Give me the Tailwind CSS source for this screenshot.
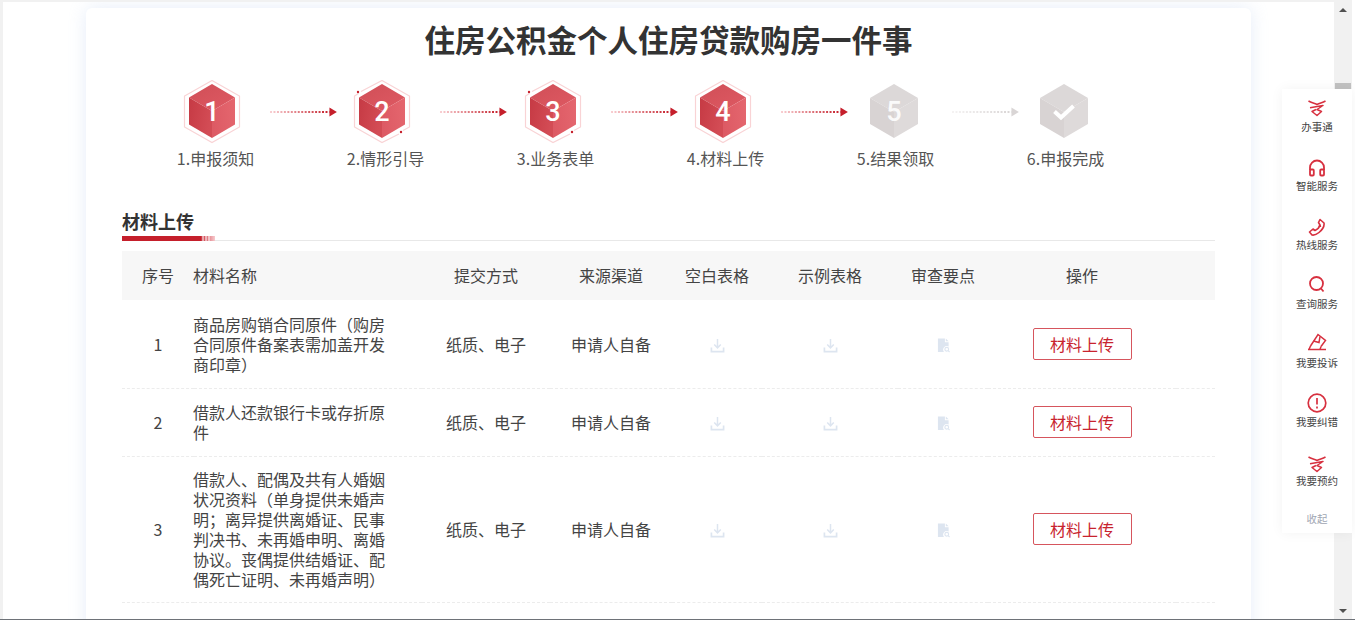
<!DOCTYPE html>
<html lang="zh">
<head>
<meta charset="utf-8">
<script src="https://cdn.jsdelivr.net/npm/@tailwindcss/browser@4"></script>
</head>
<body class="bg-white">
<svg width="0" height="0" class="absolute">
  <defs>
    <linearGradient id="gl" x1="0" y1="0" x2="1" y2="0.3"><stop offset="0" stop-color="#c63a44"/><stop offset="1" stop-color="#d34c55"/></linearGradient>
    <linearGradient id="gr" x1="0" y1="0.5" x2="1" y2="0.3"><stop offset="0" stop-color="#dd5a64"/><stop offset="1" stop-color="#e4666e"/></linearGradient>
    <linearGradient id="gt" x1="0" y1="0" x2="1" y2="1"><stop offset="0" stop-color="#d04e57"/><stop offset="1" stop-color="#df5a63"/></linearGradient>
    <linearGradient id="al" gradientUnits="userSpaceOnUse" x1="0" y1="0" x2="60" y2="0"><stop offset="0" stop-color="#f9d0d3"/><stop offset="1" stop-color="#c51f2b"/></linearGradient>
    <linearGradient id="ag" gradientUnits="userSpaceOnUse" x1="0" y1="0" x2="60" y2="0"><stop offset="0" stop-color="#f5f3f3"/><stop offset="1" stop-color="#d9d5d5"/></linearGradient>
    <linearGradient id="bar" x1="0" y1="0" x2="1" y2="0"><stop offset="0" stop-color="#c51f2b"/><stop offset="1" stop-color="#f7c5c9"/></linearGradient>
    <g id="hexred">
      <polygon points="30,4 53,17.500 30,31 7,17.500" fill="url(#gt)"/>
      <polygon points="7,17.500 30,31 30,58 7,44.500" fill="url(#gl)"/>
      <polygon points="53,17.500 30,31 30,58 53,44.500" fill="url(#gr)"/>
    </g>
    <g id="hexgray">
      <polygon points="30,4 54,18 30,32 6,18" fill="#dcd8d8"/>
      <polygon points="6,18 30,32 30,58 6,44" fill="#d8d3d3"/>
      <polygon points="54,18 30,32 30,58 54,44" fill="#dedada"/>
    </g>
    <g id="flow" fill="none" stroke="#d7303f" stroke-width="1.500" stroke-linejoin="round">
      <path d="M0.500 1c3 1.800 5.500 2 8.500 3.500 3-1.500 5.500-1.700 8.500-3.500"/>
      <path d="M2 7.800L15 5.500 9 9.500l4.500 2L9 15.500l-5-4 4-2"/>
    </g>
    <symbol id="arrow" viewBox="0 0 68 12">
      <line x1="0" y1="6" x2="60" y2="6" stroke="url(#al)" stroke-width="2" stroke-dasharray="2 1.500"/>
      <polygon points="60,1.500 67.500,6 60,10.500" fill="#c51f2b"/>
    </symbol>
    <symbol id="arrowg" viewBox="0 0 68 12">
      <line x1="0" y1="6" x2="60" y2="6" stroke="url(#ag)" stroke-width="2" stroke-dasharray="2 1.500"/>
      <polygon points="60,1.500 67.500,6 60,10.500" fill="#d9d5d5"/>
    </symbol>
    <symbol id="dl" viewBox="0 0 16 16">
      <path d="M8 1v9M4.500 7l3.500 3.500L11.500 7" fill="none" stroke="#dde5f0" stroke-width="1.600"/>
      <path d="M1.500 10v4.500h13V10" fill="none" stroke="#dde5f0" stroke-width="1.800"/>
    </symbol>
    <symbol id="doc" viewBox="0 0 14 16">
      <path d="M1 0.500h7.500v4h4v4.500a4 4 0 0 0-5 6H1z" fill="#dde5f0"/>
      <path d="M9.500 0.500l3 3h-3z" fill="#dde5f0"/>
      <circle cx="10.500" cy="12" r="2" fill="none" stroke="#dde5f0" stroke-width="1.200"/>
      <path d="M12 13.500l1.500 1.500" stroke="#dde5f0" stroke-width="1.200"/>
    </symbol>
  </defs>
</svg>

<div class="relative w-[1355px] h-[622px] overflow-hidden bg-white flex flex-col font-['Noto_Sans_CJK_SC',sans-serif] text-[#3d3d3d]">
  <div class="h-[2px] w-[1352px] bg-[#f1f1f1]"></div>
  <div class="flex-1 min-h-0 flex">
    <div class="w-[3px] bg-[#f1f1f1]"></div>
    <main class="w-[1331px] min-h-0 overflow-hidden pl-[83px] pt-[6px] bg-white">
      <section class="w-[1165px] h-[700px] bg-white rounded-t-md shadow-[0_0_18px_rgba(150,180,230,0.24)]">
        <h1 class="h-[62px] text-center text-[30.5px] leading-[62px] font-bold text-[#333]">住房公积金个人住房贷款购房一件事</h1>

        <div class="flex items-center pl-[96px] h-[65px] mt-[10px]">
          <svg class="w-[60px] h-[65px] shrink-0" viewBox="0 0 60 65">
            <polygon points="30,0.500 57.500,16 57.500,47 30,62.500 2.500,47 2.500,16" fill="none" stroke="#f9d3d5" stroke-width="1.200"/>
            <use href="#hexred"/>
            <text x="30" y="41" text-anchor="middle" font-family="Roboto" font-weight="500" font-size="27" fill="#fff">1</text>
          </svg>
          <svg class="w-[67.4px] h-[12px] ml-[28px] mr-[15px] shrink-0 -mt-px"><use href="#arrow"/></svg>
          <svg class="w-[60px] h-[65px] shrink-0" viewBox="0 0 60 65">
            <path d="M9 11.500L30 0.500l27.500 15.500v31L51 50.500M47 54L30 62.500 2.500 47V16l4-2.500" fill="none" stroke="#f9d3d5" stroke-width="1.200"/>
            <use href="#hexred"/>
            <circle cx="6" cy="12" r="1.200" fill="#c51f2b"/><circle cx="49" cy="52" r="1.200" fill="#c51f2b"/>
            <text x="30" y="41" text-anchor="middle" font-family="Roboto" font-weight="500" font-size="27" fill="#fff">2</text>
          </svg>
          <svg class="w-[67.4px] h-[12px] ml-[28px] mr-[15px] shrink-0 -mt-px"><use href="#arrow"/></svg>
          <svg class="w-[60px] h-[65px] shrink-0" viewBox="0 0 60 65">
            <path d="M9 11.500L30 0.500l27.500 15.500v31L51 50.500M47 54L30 62.500 2.500 47V16l4-2.500" fill="none" stroke="#f9d3d5" stroke-width="1.200"/>
            <use href="#hexred"/>
            <circle cx="6" cy="12" r="1.200" fill="#c51f2b"/><circle cx="49" cy="52" r="1.200" fill="#c51f2b"/>
            <text x="30" y="41" text-anchor="middle" font-family="Roboto" font-weight="500" font-size="27" fill="#fff">3</text>
          </svg>
          <svg class="w-[67.4px] h-[12px] ml-[28px] mr-[15px] shrink-0 -mt-px"><use href="#arrow"/></svg>
          <svg class="w-[60px] h-[65px] shrink-0" viewBox="0 0 60 65">
            <polygon points="30,0.500 57.500,16 57.500,47 30,62.500 2.500,47 2.500,16" fill="none" stroke="#f9d3d5" stroke-width="1.200"/>
            <use href="#hexred"/>
            <text x="30" y="41" text-anchor="middle" font-family="Roboto" font-weight="500" font-size="27" fill="#fff">4</text>
          </svg>
          <svg class="w-[67.4px] h-[12px] ml-[28px] mr-[15px] shrink-0 -mt-px"><use href="#arrow"/></svg>
          <svg class="w-[60px] h-[65px] shrink-0" viewBox="0 0 60 65">
            <use href="#hexgray"/>
            <text x="30" y="41" text-anchor="middle" font-family="Roboto" font-weight="500" font-size="27" fill="#fff" fill-opacity="0.9">5</text>
          </svg>
          <svg class="w-[67.4px] h-[12px] ml-[28px] mr-[15px] shrink-0 -mt-px"><use href="#arrowg"/></svg>
          <svg class="w-[60px] h-[65px] shrink-0" viewBox="0 0 60 65">
            <use href="#hexgray"/>
            <path d="M20.500 31.500l6.500 6 12.500-11.500" fill="none" stroke="#fff" stroke-width="4"/>
          </svg>
        </div>

        <div class="flex pl-[44.5px] mt-px text-[16px] leading-[24px] text-[#555]">
          <div class="w-[170px] text-center">1.申报须知</div>
          <div class="w-[170px] text-center">2.情形引导</div>
          <div class="w-[170px] text-center">3.业务表单</div>
          <div class="w-[170px] text-center">4.材料上传</div>
          <div class="w-[170px] text-center">5.结果领取</div>
          <div class="w-[170px] text-center">6.申报完成</div>
        </div>

        <div class="ml-[36px] w-[1093px] mt-[37px] h-[34px] border-b border-[#e8e8e8] relative">
          <h2 class="text-[18px] leading-[28px] font-bold text-[#333]">材料上传</h2>
          <svg class="absolute left-0 bottom-[-1px] w-[93px] h-[5px]" viewBox="0 0 93 5">
            <rect width="79" height="5" fill="#c51f2b"/>
            <rect x="79" width="14" height="5" fill="url(#bar)" opacity="0.9"/>
            <path d="M81 0v5M84 0v5M87 0v5" stroke="#fff" stroke-width="1"/>
          </svg>
        </div>

        <table class="ml-[36px] mt-[10px] w-[1093px] table-fixed border-collapse text-[16px] leading-[20px] text-[#444]">
          <colgroup>
            <col class="w-[72px]"><col class="w-[228px]"><col class="w-[128px]"><col class="w-[122px]"><col class="w-[90px]"><col class="w-[136px]"><col class="w-[90px]"><col class="w-[188px]"><col class="w-[39px]">
          </colgroup>
          <thead>
            <tr class="h-[49px] bg-[#f7f7f7]">
              <th class="font-normal text-center pb-[2px]">序号</th>
              <th class="font-normal text-left pb-[2px] -translate-x-px">材料名称</th>
              <th class="font-normal text-center pb-[2px]">提交方式</th>
              <th class="font-normal text-center pb-[2px]">来源渠道</th>
              <th class="font-normal text-center pb-[2px]">空白表格</th>
              <th class="font-normal text-center pb-[2px]">示例表格</th>
              <th class="font-normal text-center pb-[2px]">审查要点</th>
              <th class="font-normal text-center pb-[2px]">操作</th>
              <th></th>
            </tr>
          </thead>
          <tbody>
            <tr class="h-[88px] border-b border-dashed border-[#ececec]">
              <td class="text-center">1</td>
              <td><div class="w-[197px] -translate-x-px">商品房购销合同原件（购房合同原件备案表需加盖开发商印章）</div></td>
              <td class="text-center">纸质、电子</td>
              <td class="text-center">申请人自备</td>
              <td><svg class="mx-auto mt-[3px] w-[15px] h-[15px]"><use href="#dl"/></svg></td>
              <td><svg class="mx-auto mt-[3px] w-[15px] h-[15px]"><use href="#dl"/></svg></td>
              <td><svg class="mx-auto mt-[3px] w-[13px] h-[15px]"><use href="#doc"/></svg></td>
              <td><button class="block mx-auto w-[99px] h-[32px] border border-[#d6555d] rounded-[2px] text-[#c8232e]">材料上传</button></td>
              <td></td>
            </tr>
            <tr class="h-[68px] border-b border-dashed border-[#ececec]">
              <td class="text-center">2</td>
              <td><div class="w-[197px] -translate-x-px">借款人还款银行卡或存折原件</div></td>
              <td class="text-center">纸质、电子</td>
              <td class="text-center">申请人自备</td>
              <td><svg class="mx-auto mt-[3px] w-[15px] h-[15px]"><use href="#dl"/></svg></td>
              <td><svg class="mx-auto mt-[3px] w-[15px] h-[15px]"><use href="#dl"/></svg></td>
              <td><svg class="mx-auto mt-[3px] w-[13px] h-[15px]"><use href="#doc"/></svg></td>
              <td><button class="block mx-auto w-[99px] h-[32px] border border-[#d6555d] rounded-[2px] text-[#c8232e]">材料上传</button></td>
              <td></td>
            </tr>
            <tr class="h-[146px] border-b border-dashed border-[#ececec]">
              <td class="text-center">3</td>
              <td><div class="w-[197px] -translate-x-px">借款人、配偶及共有人婚姻状况资料（单身提供未婚声明；离异提供离婚证、民事判决书、未再婚申明、离婚协议。丧偶提供结婚证、配偶死亡证明、未再婚声明）</div></td>
              <td class="text-center">纸质、电子</td>
              <td class="text-center">申请人自备</td>
              <td><svg class="mx-auto mt-[3px] w-[15px] h-[15px]"><use href="#dl"/></svg></td>
              <td><svg class="mx-auto mt-[3px] w-[15px] h-[15px]"><use href="#dl"/></svg></td>
              <td><svg class="mx-auto mt-[3px] w-[13px] h-[15px]"><use href="#doc"/></svg></td>
              <td><button class="block mx-auto w-[99px] h-[32px] border border-[#d6555d] rounded-[2px] text-[#c8232e]">材料上传</button></td>
              <td></td>
            </tr>
          </tbody>
        </table>
      </section>
    </main>
    <div class="w-[18px] bg-[#f1f1f1] flex flex-col items-center">
      <div class="h-[15px] flex items-center justify-center"><div class="w-0 h-0 border-x-[4px] border-x-transparent border-b-[4px] border-b-[#505050]"></div></div>
      <div class="mt-[66px] w-[16px] h-[60px] bg-[#c1c1c1]"></div>
      <div class="mt-auto h-[17px] flex items-center justify-center"><div class="w-0 h-0 border-x-[4px] border-x-transparent border-t-[4px] border-t-[#505050]"></div></div>
    </div>
    <div class="w-[3px] bg-white"></div>
  </div>
  <div class="h-[3px] border-t border-[#6e7278] bg-white"></div>

  <aside class="absolute left-[1282px] top-[89px] w-[70px] h-[444px] bg-white shadow-[0_0_12px_rgba(0,0,0,0.05)] flex flex-col items-center pt-[10px] text-[10.5px] leading-[14px] text-[#444]">
    <div class="h-[59px] flex flex-col items-center">
      <svg class="w-[18px] h-[18px] mb-[2px] mt-px" viewBox="0 0 18 18"><use href="#flow"/></svg><span>办事通</span>
    </div>
    <div class="h-[59px] flex flex-col items-center">
      <svg class="w-[18px] h-[18px] mb-[2px] mt-px" viewBox="0 0 18 18" fill="none" stroke="#d7303f" stroke-width="1.800"><path d="M2 11V8.500a7 7 0 0 1 14 0V11"/><rect x="2" y="10.500" width="3.800" height="6" rx="1"/><rect x="12.200" y="10.500" width="3.800" height="6" rx="1"/></svg><span>智能服务</span>
    </div>
    <div class="h-[59px] flex flex-col items-center">
      <svg class="w-[18px] h-[18px] mb-[2px] mt-px" viewBox="0 0 18 18" fill="none" stroke="#d7303f" stroke-width="1.600" stroke-linejoin="round"><path d="M12 1.500l4 3.500c.5 3-2 7-5 9.500-2.500 2-5 3-7 2.500l-2.500-3 3.500-3 2 1.500c2-1 4.500-3.500 5-5.500L10.500 4.500z"/><path d="M11 7c1 .3 1.500 1 1.500 2"/></svg><span>热线服务</span>
    </div>
    <div class="h-[59px] flex flex-col items-center">
      <svg class="w-[18px] h-[18px] mb-[2px] -mt-px" viewBox="0 0 18 18" fill="none" stroke="#d7303f" stroke-width="1.800"><circle cx="8.500" cy="8.500" r="6.500"/><path d="M13 13.500l2.500 3"/></svg><span class="mt-[2px]">查询服务</span>
    </div>
    <div class="h-[59px] flex flex-col items-center">
      <svg class="w-[20px] h-[18px] mb-[2px] -mt-[2px]" viewBox="0 0 20 18" fill="none" stroke="#d7303f" stroke-width="1.500"><path d="M3.500 13L11 1.500l7.500 6L14 13.500"/><path d="M6.500 8l5.500 1.500 1-6"/><path d="M1 16.500h18" stroke-width="1.500"/><path d="M3.500 13l-1.500 3.500M14 13.500l-1 3"/></svg><span class="mt-[3px]">我要投诉</span>
    </div>
    <div class="h-[60px] flex flex-col items-center">
      <svg class="w-[20px] h-[20px] mb-[2px] -mt-[1px]" viewBox="0 0 20 20" fill="none" stroke="#d7303f" stroke-width="1.700"><circle cx="10" cy="10" r="8.800"/><path d="M10 5v6.500M10 13.500v2"/></svg><span>我要纠错</span>
    </div>
    <div class="h-[58px] flex flex-col items-center">
      <svg class="w-[18px] h-[18px] mt-[2px]" viewBox="0 0 18 18"><use href="#flow"/></svg><span>我要预约</span>
    </div>
    <span class="text-[#a0a6b2]">收起</span>
  </aside>
</div>
</body>
</html>
